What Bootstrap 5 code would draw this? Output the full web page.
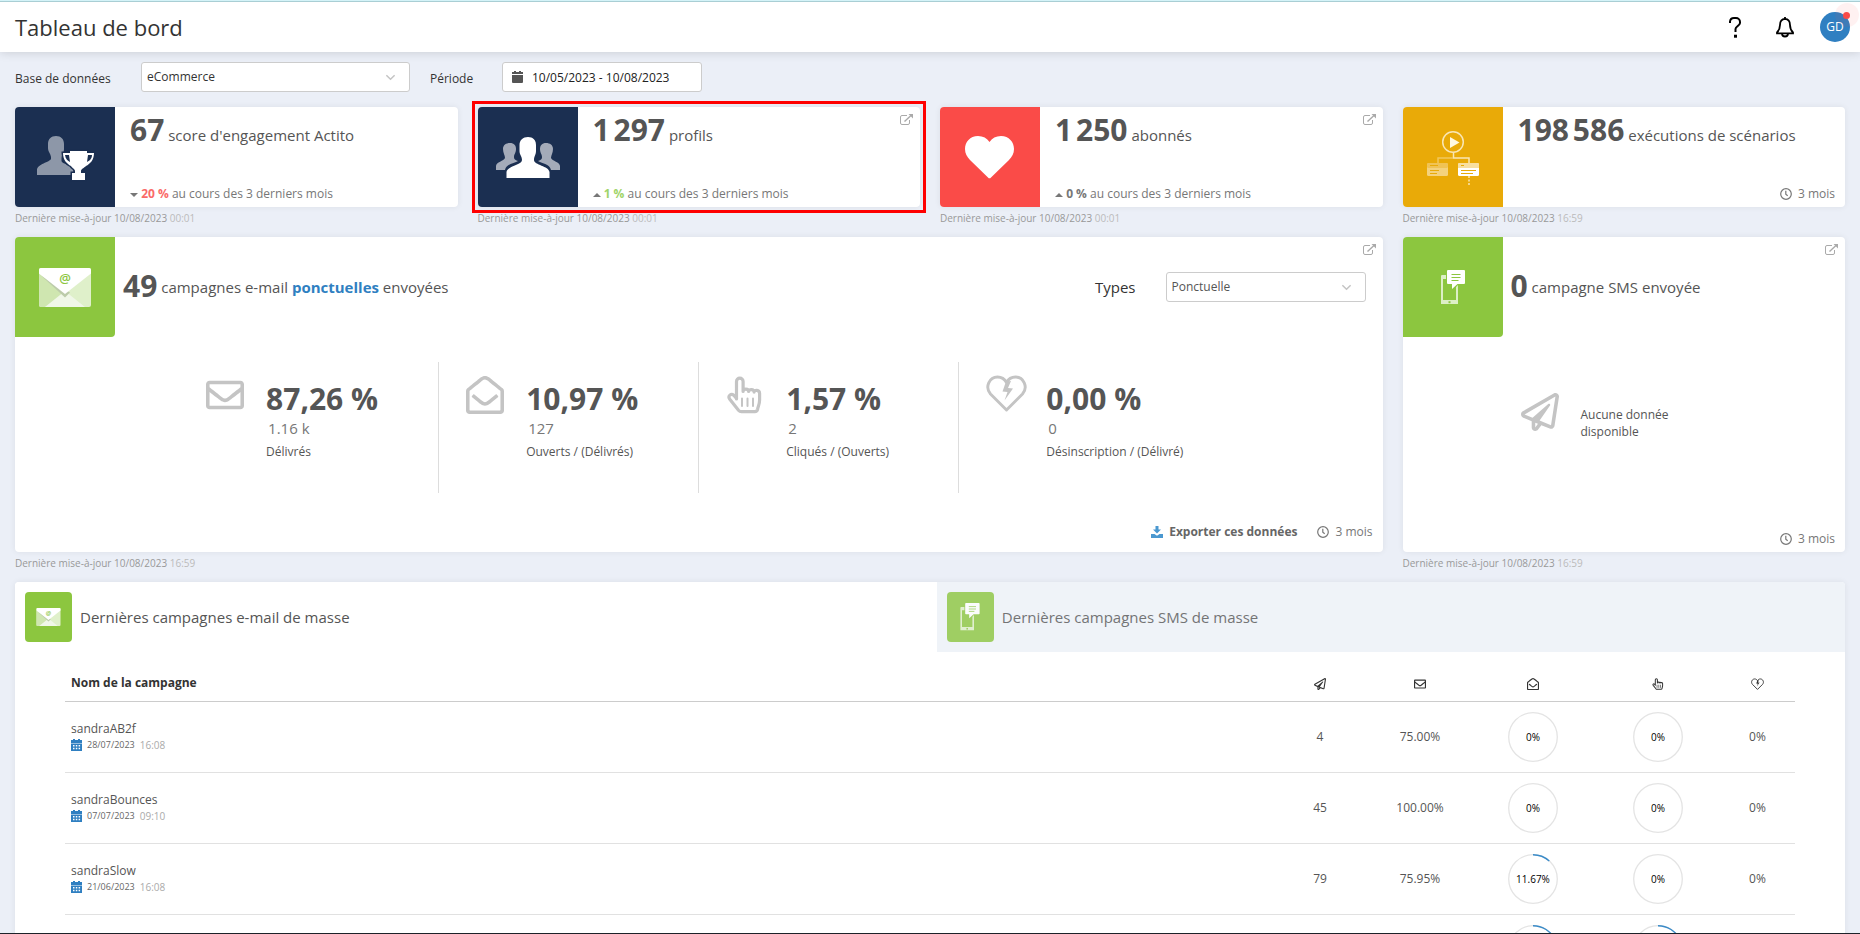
<!DOCTYPE html>
<html lang="fr">
<head>
<meta charset="utf-8">
<meta name="viewport" content="width=device-width, initial-scale=1">
<title>Tableau de bord</title>
<link rel="stylesheet" href="https://cdn.jsdelivr.net/npm/bootstrap@5.3.0/dist/css/bootstrap.min.css">
<style>
  :root { --ink: #555; --soft: #777; --faint: #bbb; --blue: #2f7fc1; --green: #8cc63f; }
  body { font-family: "Open Sans", sans-serif; font-size: 12px; line-height: 18px; color: var(--ink); background: #ebeff7; }
  .shell { height: 100vh; overflow: hidden; border-bottom: 1px solid #1d2229; }
  .topbar { height: 52px; background: #fff; border-top: 1px solid #d4f3f8; box-shadow: 0 0 10px rgba(0,0,0,.16); padding: 0 10px 0 15px; position: relative; }
  .topbar::before { content: ""; position: absolute; inset: 0 0 auto; height: 1px; background: #a9ced4; }
  .topbar h1 { font-size: 22px; line-height: 28px; font-weight: 400; color: #333; }
  .tool { border: 0; background: none; padding: 0; width: 30px; height: 30px; color: #000; position: relative; }
  .avatar { border-radius: 50%; background: var(--blue); color: #fff; font-size: 12px; }
  .avatar::before { content: ""; position: absolute; width: 24px; height: 24px; right: -9px; top: -9px; border-radius: 50%; background: rgba(250,75,72,.08); }
  .avatar::after { content: ""; position: absolute; width: 7px; height: 7px; right: 0; top: 0; border-radius: 50%; background: #fa4b48; }
  .tools { gap: 20px; }
  main { padding: 10px 15px 0; }
  .filters { height: 30px; color: #333; }
  .filters label { padding-top: 4px; }
  .w-base { width: 126px; } .w-period { width: 72px; margin-left: 20px; }
  .pick { height: 30px; border: 1px solid #ccc; border-radius: 3px; font-size: 12px; line-height: 18px; padding: 5px 30px 5px 5px; color: #333; background-color: #fff;
    background-image: url("data:image/svg+xml,%3Csvg xmlns='http://www.w3.org/2000/svg' viewBox='0 0 12 12'%3E%3Cpath fill='none' stroke='%23c4c4c4' stroke-width='1.6' d='M1.5 3.5 6 8l4.500-4.500'/%3E%3C/svg%3E"); background-size: 11px; background-position: right 13px center; }
  .pick-base { width: 269px; } .pick-type { width: 200px; color: var(--ink); }
  .datebox { width: 200px; height: 30px; border: 1px solid #ccc; border-radius: 3px; background: #fff; padding-left: 9px; gap: 9px; }
  .datebox input { border: 0; outline: 0; padding: 1px 0 0; width: 160px; color: #222; background: none; }
  .board { --bs-gutter-x: 20px; --bs-gutter-y: 0; }
  .board-top { margin-top: 15px; }
  .tile { background: #fff; border-radius: 4px; box-shadow: 0 0 6px rgba(0,0,0,.07); position: relative; }
  .tile-kpi { height: 100px; }
  .tile-tall { height: 315px; }
  .spot { outline: 3px solid #f00; outline-offset: 3px; }
  .pictile { width: 100px; height: 100px; flex: none; border-radius: 4px 0 0 4px; }
  .tile-tall .pictile { border-radius: 4px 0; }
  .navy { background: #1b2f51; } .coral { background: #fa4b48; } .amber { background: #e9aa08; } .lime { background: var(--green); }
  .kpi { padding: 8px 10px 4px 15px; }
  .headline { font-size: 15px; line-height: 30px; white-space: nowrap; }
  .headline b { font-size: 30px; }
  .headline strong { color: var(--blue); }
  .trend { color: var(--soft); font-size: 12px; white-space: nowrap; }
  .down { color: #fa6a68; } .up { color: #a0d468; }
  .stamp { font-size: 10px; line-height: 14px; height: 30px; padding-top: 4px; color: #999; }
  .stamp span { color: var(--faint); }
  .opener { position: absolute; right: 7px; top: 7px; color: #aaa; line-height: 0; }
  .range { color: var(--soft); gap: 6px; }
  .tall-title { padding-left: 8px; padding-top: 34px; }
  .tall-title b { vertical-align: -4px; }
  .types { padding: 35px 17px 0 0; color: #333; font-size: 15px; gap: 30px; }
  .types label { padding-top: 6px; }
  .metrics { width: 76%; height: 131px; margin: 25px auto 0; }
  .metric { flex: 1 1 0; padding: 12px 0 0 27px; }
  .metric + .metric { border-left: 1px solid #ddd; }
  .metric svg { width: 41px; height: 41px; color: #c4c4c4; flex: none; padding: 2px 3px 1px 0; }
  .metric .texts { padding-left: 19px; white-space: nowrap; }
  .metric svg.wide { padding: 0; }
  .pct { font-size: 30px; line-height: 36px; font-weight: 700; padding-top: 7px; }
  .raw { font-size: 15px; line-height: 20px; color: var(--soft); padding: 1px 0 5px 2px; }
  .foot { position: absolute; right: 10px; bottom: 11px; }
  .foot-mail { gap: 20px; }
  .foot-sms { bottom: 4px; }
  .export { color: #666; font-weight: 700; text-decoration: none; gap: 6px; }
  .empty { padding: 56px 0 0 118px; gap: 22px; line-height: 17px; }
  .empty svg { color: #c4c4c4; }
  .empty p { padding-top: 13px; width: 110px; }
  .tab { height: 70px; border: 0; background: #fff; padding: 10px; gap: 8px; font-size: 15px; line-height: 22px; color: var(--ink); text-align: left; }
  .tab-mail { flex: 922 1 0; border-radius: 4px 0 0; }
  .tab-sms { flex: 908 1 0; border-radius: 0 4px 0 0; background: #eff3f8; }
  .tab-sms > * { opacity: .8; }
  .tab .chip { width: 47px; height: 50px; border-radius: 4px; }
  .list-wrap { padding: 0 50px; }
  .runs { width: 100%; table-layout: fixed; margin: 0; color: var(--ink); text-align: center; }
  .runs th { height: 49px; padding: 14px 0 0; border-bottom: 1px solid #ccc; color: #333; vertical-align: middle; }
  .runs td { height: 71px; padding: 0; border-bottom: 1px solid #e1e1e1; vertical-align: middle; }
  .runs th:first-child, .runs td:first-child { text-align: left; padding-left: 6px; }
  .runs td:first-child { padding-bottom: 2px; }
  .runs td > a { color: var(--ink); text-decoration: none; }
  .when { font-size: 9px; line-height: 14px; gap: 5px; }
  .when svg { color: var(--blue); flex: none; }
  .when time { color: #666; } .when span { color: #aaa; font-size: 10px; }
  .ring { width: 50px; height: 50px; display: block; margin: 0 auto; font-size: 10px; fill: #000; }
</style>
</head>
<body>
<svg class="d-none" xmlns="http://www.w3.org/2000/svg">
  <symbol id="mail" viewBox="0 0 512 512"><path fill="currentColor" d="M464 64H48C21.490 64 0 85.490 0 112v288c0 26.510 21.490 48 48 48h416c26.510 0 48-21.490 48-48V112c0-26.510-21.490-48-48-48zm0 48v40.805c-22.422 18.259-58.168 46.651-134.587 106.490-16.841 13.247-50.201 45.072-73.413 44.701-23.208.375-56.579-31.459-73.413-44.701C106.180 199.465 70.425 171.067 48 152.805V112h416zM48 400V214.398c22.914 18.251 55.409 43.862 104.938 82.646 21.857 17.205 60.134 55.186 103.062 54.955 42.717.231 80.509-37.199 103.053-54.947 49.528-38.783 82.032-64.401 104.947-82.653V400H48z"/></symbol>
  <symbol id="mail-open" viewBox="0 0 512 512"><path fill="currentColor" d="M494.586 164.516c-4.697-3.883-111.723-89.950-135.251-108.657C337.231 38.191 299.437 0 256 0c-43.205 0-80.636 37.717-103.335 55.859-24.463 19.450-131.070 105.195-135.150 108.549A48.004 48.004 0 0 0 0 201.485V464c0 26.510 21.490 48 48 48h416c26.510 0 48-21.490 48-48V201.509a48 48 0 0 0-17.414-36.993zM464 458a6 6 0 0 1-6 6H54a6 6 0 0 1-6-6V204.347c0-1.813.816-3.526 2.226-4.665 15.870-12.814 108.793-87.554 132.364-106.293C200.755 78.880 232.398 48 256 48c23.693 0 55.857 31.369 73.410 45.389 23.573 18.741 116.503 93.493 132.366 106.316a5.990 5.990 0 0 1 2.224 4.663V458zm-31.991-187.704c4.249 5.159 3.465 12.795-1.745 16.981-28.975 23.283-59.274 47.597-70.929 56.863C336.636 362.283 299.205 400 256 400c-43.452 0-81.287-38.237-103.335-55.860-11.279-8.967-41.744-33.413-70.927-56.864-5.211-4.187-5.993-11.822-1.745-16.981l15.258-18.528c4.178-5.073 11.657-5.843 16.779-1.726 28.618 23.001 58.566 47.035 70.560 56.571C200.143 320.631 232.307 352 256 352c23.602 0 55.246-30.880 73.410-45.389 11.994-9.535 41.944-33.570 70.563-56.568 5.122-4.116 12.601-3.346 16.778 1.727l15.258 18.526z"/></symbol>
  <symbol id="plane" viewBox="0 0 512 512"><path fill="currentColor" d="M440 6.500L24 246.400c-34.400 19.900-31.100 70.800 5.700 85.900L144 379.600V464c0 46.400 59.200 65.500 86.600 28.600l43.800-59.100 111.900 46.200c5.900 2.400 12.100 3.600 18.300 3.600 8.200 0 16.300-2.100 23.600-6.200 12.800-7.200 21.600-20 23.900-34.500l59.400-387.200c6.100-40.100-36.900-68.800-71.500-48.900zM192 464v-64.600l36.600 15.100L192 464zm212.600-28.700l-153.800-63.500L391 169.500c10.700-15.500-9.500-33.500-23.700-21.200L155.800 332.600 48 288 464 48l-59.400 387.300z"/></symbol>
  <symbol id="hand" viewBox="0 0 38 38"><g fill="none" stroke="currentColor" stroke-width="3.200" stroke-linecap="round" stroke-linejoin="round"><path d="M10.500 23V5.500a3.300 3.300 0 0 1 6.600 0V15.500c0-3.300 5.500-3.300 5.500 0 0-2.600 5.500-2.600 5.500.6 0-2.500 5.500-2.500 5.500 1.400v6.500c0 4-1.500 6.500-2 9.300a3 3 0 0 1-2.800 2.300H15.500a4 4 0 0 1-3-1.400L3.800 23.300c-2.500-3.500 1.300-6.300 4-4l2.700 3.200"/><path stroke-width="2" d="M16 22.500v7.500M21.500 22.500v7.500M27 22.500v7.500"/></g></symbol>
  <symbol id="broken" viewBox="0 0 41 41"><path fill="none" stroke="currentColor" stroke-width="2.900" stroke-linejoin="round" d="M20.500 36 4.500 20C-1.500 13 3.500 3 11.500 3c4 0 7 1.800 9 5.500 2-3.700 5-5.500 9-5.500 8 0 13 10 7 17z"/><path fill="currentColor" d="m20 7.500-3.500 10 5 .5-3 8.500 8.500-12-5-.5 3-7z"/></symbol>
  <symbol id="clock" viewBox="0 0 12 12"><circle cx="6" cy="6" r="5.300" fill="none" stroke="currentColor" stroke-width="1.200"/><path fill="none" stroke="currentColor" stroke-width="1.200" d="M5.800 2.800v3.400l1.900 1.500"/></symbol>
  <symbol id="ext" viewBox="0 0 13 11"><path fill="none" stroke="currentColor" stroke-width="1" d="M7 1.500H2A1.500 1.500 0 0 0 .5 3v6A1.500 1.500 0 0 0 2 10.500h6A1.500 1.500 0 0 0 9.500 9V6"/><path fill="none" stroke="currentColor" stroke-width="1.400" d="M4.500 7.500 11 1.500"/><path fill="currentColor" d="M8.500 0H13v4.500z"/></symbol>
  <symbol id="cal" viewBox="0 0 11 12"><path fill="currentColor" d="M2 0h2v1h3V0h2v1h2v3H0V1h2zM0 4.600h11V12H0z"/><path fill="#fff" d="M2 6h1.500v1.500H2zm2.800 0h1.500v1.500H4.800zm2.800 0h1.500v1.500H7.600zM2 8.800h1.500v1.500H2zm2.800 0h1.500v1.500H4.800zm2.800 0h1.500v1.500H7.600z"/></symbol>
  <symbol id="envelope-art" viewBox="0 0 52 39"><rect width="52" height="39" rx="2" fill="#dff0ca"/><path fill="#cfe6b0" d="M0 5.500 26 27 6 39H2a2 2 0 0 1-2-2z"/><path fill="#f0f7e8" d="M6 39 26 23l20 16z"/><path fill="#bccbaa" d="m2 7.500 24 22 5-5-5-3z"/><path fill="#fff" d="M2 0h48a2 2 0 0 1 2 2v3.500L26 26 0 5.500V2a2 2 0 0 1 2-2z"/><text x="26" y="15" text-anchor="middle" font-size="13" font-weight="600" fill="#8cc63f">@</text></symbol>
  <symbol id="phone-art" viewBox="0 0 24 35"><path fill="#ddefc6" fill-rule="evenodd" d="M1 5h15a1 1 0 0 1 1 1v28H0V6a1 1 0 0 1 1-1zm1 4v21h13V9z"/><rect x="7.500" y="31.200" width="2" height="2" fill="#8cc63f"/><path fill="#8cc63f" d="M5 4h12v11l-5 5-1-5H5z"/><path fill="#fff" d="M7 0h16a1 1 0 0 1 1 1v12a1 1 0 0 1-1 1h-6.500L11 19v-5H7a1 1 0 0 1-1-1V1a1 1 0 0 1 1-1z"/><path stroke="#8cc63f" d="M10.500 4.500h9M10.500 7.500h9M10.500 10.500h7"/></symbol>
</svg>

<div class="shell">
  <header class="topbar d-flex align-items-center justify-content-between">
    <h1 class="m-0">Tableau de bord</h1>
    <div class="tools d-flex">
      <button class="tool" type="button" aria-label="Aide"><svg width="20" height="22" viewBox="0 0 20 22" fill="none" stroke="currentColor" stroke-width="2"><path d="M5 7V5.500A4 4 0 0 1 9 2h2a4 4 0 0 1 4 4v1c0 2.500-4.500 3.500-4.500 6v3"/><path stroke-width="3" d="M9 20.200h3"/></svg></button>
      <button class="tool" type="button" aria-label="Notifications"><svg width="20" height="22" viewBox="0 0 20 22" fill="none" stroke="currentColor" stroke-width="1.800"><path d="M10 2.800C6.500 3 5 5.800 5 9c0 4-1 5.500-3 7.500v.8h16v-.8c-2-2-3-3.500-3-7.500 0-3.200-1.500-6-5-6.200zM10 1v2M7 17.500a3 3 0 0 0 6 0"/></svg></button>
      <button class="tool avatar" type="button">GD</button>
    </div>
  </header>

  <main>
    <form class="filters d-flex align-items-center">
      <label class="w-base" for="base">Base de données</label>
      <select class="form-select pick pick-base" id="base"><option>eCommerce</option></select>
      <label class="w-period" for="period">Période</label>
      <div class="datebox d-flex align-items-center">
        <svg width="11" height="12" viewBox="0 0 11 12" fill="#555"><path d="M2 0h2v1h3V0h2v1h2v2H0V1h2zM0 4h11v7a1 1 0 0 1-1 1H1a1 1 0 0 1-1-1z"/></svg>
        <input id="period" type="text" value="10/05/2023 - 10/08/2023">
      </div>
    </form>

    <div class="row board board-top">
      <div class="col-3">
        <section class="tile tile-kpi d-flex">
          <div class="pictile navy"><svg width="100" height="100" viewBox="0 0 100 100"><path fill="#8d97a8" d="M41 29c5 0 8 3 8 8v5c0 4-2 5-2.500 9v3c0 3 11 4 12 8v6H22v-5c0-6 13-8 14-11v-2c-.5-4-3-5-3-9v-4c0-5 3-8 8-8z"/><path fill="#1b2f51" stroke="#1b2f51" stroke-width="3" d="M55 44h17v2h7c0 7-4 11-8 13-2 2-5 3-5 5v2h4v7H57v-7h3v-2c0-2-3-3-4-5-4-2-8-6-8-13h7z"/><path fill="#fff" fill-rule="evenodd" d="M55 44h17v2h7c0 7-4 11-8 13-2 2-5 3-5 5v2h4v7H57v-7h3v-2c0-2-3-3-4-5-4-2-8-6-8-13h7zm-5 4c.5 4 3 6 5 7l-1-7zm23 0-1 7c2-1 5-3 5-7z"/></svg></div>
          <div class="kpi flex-fill d-flex flex-column justify-content-between">
            <div class="headline"><b>67</b> score d'engagement Actito</div>
            <div class="trend"><svg width="8" height="6" viewBox="0 0 8 6"><path fill="#777" d="M0 1h8L4 5z"/></svg> <b class="down">20&nbsp;%</b> au cours des 3 derniers mois</div>
          </div>
        </section>
        <div class="stamp">Dernière mise-à-jour 10/08/2023 <span>00:01</span></div>
      </div>
      <div class="col-3">
        <div class="spot">
        <section class="tile tile-kpi d-flex">
          <div class="pictile navy"><svg width="100" height="100" viewBox="0 0 100 100"><g fill="#a4abb9"><path id="side" d="M32 36c4 0 6 2.500 6 6 0 4-2 5-2 8 0 3 2 3 4 4-3 2-12 3-13 9H18v-4c0-4 8-5 9-8 0-3-2-5-2-9s3-6 7-6z"/><use href="#side" transform="matrix(-1 0 0 1 100 0)"/></g><path fill="#fff" d="M50 30c5 0 8 3 8 8v6c0 4-2 5-2 9 0 5 15 6 15.500 12v6h-43v-6C29 59 44 58 44 53c0-4-2.500-5-2.500-9v-6c0-5 3.500-8 8.500-8z"/></svg></div>
          <div class="kpi flex-fill d-flex flex-column justify-content-between">
            <div class="headline"><b>1&#8239;297</b> profils</div>
            <div class="trend"><svg width="8" height="6" viewBox="0 0 8 6"><path fill="#777" d="M0 5h8L4 1z"/></svg> <b class="up">1&nbsp;%</b> au cours des 3 derniers mois</div>
          </div>
          <a class="opener" href="#profils" aria-label="Ouvrir les profils"><svg width="13" height="11"><use href="#ext"/></svg></a>
        </section>
        </div>
        <div class="stamp">Dernière mise-à-jour 10/08/2023 <span>00:01</span></div>
      </div>
      <div class="col-3">
        <section class="tile tile-kpi d-flex">
          <div class="pictile coral"><svg width="100" height="100" viewBox="0 0 100 100"><path fill="#fff" d="M51 70.500a2 2 0 0 1-3 0L30 53c-3-3.500-5-6.500-5-11 0-7 5-13 13-13 5 0 9 2 11.500 6 2.500-4 6.500-6 11.500-6 8 0 13 6 13 13 0 4.500-2 7.500-5 11z"/></svg></div>
          <div class="kpi flex-fill d-flex flex-column justify-content-between">
            <div class="headline"><b>1&#8239;250</b> abonnés</div>
            <div class="trend"><svg width="8" height="6" viewBox="0 0 8 6"><path fill="#777" d="M0 5h8L4 1z"/></svg> <b>0&nbsp;%</b> au cours des 3 derniers mois</div>
          </div>
          <a class="opener" href="#abonnes" aria-label="Ouvrir les abonnés"><svg width="13" height="11"><use href="#ext"/></svg></a>
        </section>
        <div class="stamp">Dernière mise-à-jour 10/08/2023 <span>00:01</span></div>
      </div>
      <div class="col-3">
        <section class="tile tile-kpi d-flex">
          <div class="pictile amber"><svg width="100" height="100" viewBox="0 0 100 100"><g fill="none" stroke="#f9e6b4" stroke-width="1.500"><circle cx="50" cy="35" r="10.300"/><path d="M50.500 45.500V51H66v6"/><path stroke="#f1c75c" d="M50 51H35v6"/><path stroke-dasharray="2 1.500" d="M66 69v10"/></g><path fill="#fff8e0" d="m47 30 9.500 5.500L47 41z"/><rect x="24" y="56" width="21" height="13" rx="1.500" fill="#f4d27e"/><rect x="24" y="56" width="21" height="5" rx="1.500" fill="#f0c355"/><rect x="55" y="56" width="21" height="13" rx="1.500" fill="#fff"/><path fill="#f8dfa0" d="M55 61v-3.500a1.500 1.500 0 0 1 1.500-1.500h18a1.500 1.500 0 0 1 1.500 1.500V61z"/><path stroke="#e9aa08" d="M27 58.500h8M27 63.500h9M27 66.500h7M58 58.500h3M58 63.500h15M58 66.500h12"/></svg></div>
          <div class="kpi flex-fill d-flex flex-column justify-content-between">
            <div class="headline"><b>198&#8239;586</b> exécutions de scénarios</div>
            <div class="range d-flex align-items-center justify-content-end"><svg width="12" height="12"><use href="#clock"/></svg>3 mois</div>
          </div>
        </section>
        <div class="stamp">Dernière mise-à-jour 10/08/2023 <span>16:59</span></div>
      </div>
    </div>

    <div class="row board">
      <div class="col-9">
        <section class="tile tile-tall">
          <div class="d-flex">
            <div class="pictile lime d-flex align-items-center justify-content-center"><svg width="52" height="39"><use href="#envelope-art"/></svg></div>
            <div class="headline tall-title flex-fill"><b>49</b> campagnes e-mail <strong>ponctuelles</strong> envoyées</div>
            <div class="types d-flex align-items-start"><label for="types">Types</label>
              <select class="form-select pick pick-type" id="types"><option>Ponctuelle</option></select></div>
          </div>
          <div class="metrics d-flex">
            <div class="metric d-flex"><svg><use href="#mail"/></svg><div class="texts"><div class="pct">87,26 %</div><div class="raw">1.16 k</div><div>Délivrés</div></div></div>
            <div class="metric d-flex"><svg><use href="#mail-open"/></svg><div class="texts"><div class="pct">10,97 %</div><div class="raw">127</div><div>Ouverts / (Délivrés)</div></div></div>
            <div class="metric d-flex"><svg><use href="#hand"/></svg><div class="texts"><div class="pct">1,57 %</div><div class="raw">2</div><div>Cliqués / (Ouverts)</div></div></div>
            <div class="metric d-flex"><svg class="wide"><use href="#broken"/></svg><div class="texts"><div class="pct">0,00 %</div><div class="raw">0</div><div>Désinscription / (Délivré)</div></div></div>
          </div>
          <a class="opener" href="#emails" aria-label="Ouvrir les campagnes e-mail"><svg width="13" height="11"><use href="#ext"/></svg></a>
          <div class="foot foot-mail d-flex">
            <a class="export d-flex align-items-center" href="#export"><svg width="12" height="12" viewBox="0 0 12 12" fill="#4a98d0"><path d="M4.500 0h3v3.500H10l-4 4-4-4h2.500zM0 8h3.500L6 9.800 8.500 8H12v4H0z"/></svg>Exporter ces données</a>
            <div class="range d-flex align-items-center"><svg width="12" height="12"><use href="#clock"/></svg>3 mois</div>
          </div>
        </section>
        <div class="stamp">Dernière mise-à-jour 10/08/2023 <span>16:59</span></div>
      </div>
      <div class="col-3">
        <section class="tile tile-tall">
          <div class="d-flex">
            <div class="pictile lime d-flex align-items-center justify-content-center"><svg width="24" height="35"><use href="#phone-art"/></svg></div>
            <div class="headline tall-title"><b>0</b> campagne SMS envoyée</div>
          </div>
          <div class="empty d-flex"><svg width="38" height="38"><use href="#plane"/></svg><p class="m-0">Aucune donnée disponible</p></div>
          <a class="opener" href="#sms" aria-label="Ouvrir les campagnes SMS"><svg width="13" height="11"><use href="#ext"/></svg></a>
          <div class="foot foot-sms range d-flex align-items-center"><svg width="12" height="12"><use href="#clock"/></svg>3 mois</div>
        </section>
        <div class="stamp">Dernière mise-à-jour 10/08/2023 <span>16:59</span></div>
      </div>
    </div>

    <section class="tile">
      <div class="d-flex" role="tablist">
        <button class="tab tab-mail d-flex align-items-center" role="tab" type="button"><span class="chip lime d-flex align-items-center justify-content-center"><svg width="25" height="18"><use href="#envelope-art"/></svg></span><span>Dernières campagnes e-mail de masse</span></button>
        <button class="tab tab-sms d-flex align-items-center" role="tab" type="button"><span class="chip lime d-flex align-items-center justify-content-center"><svg width="20" height="28"><use href="#phone-art"/></svg></span><span>Dernières campagnes SMS de masse</span></button>
      </div>
      <div class="list-wrap">
        <table class="runs">
          <colgroup><col><col width="100"><col width="100"><col width="126"><col width="124"><col width="75"></colgroup>
          <thead><tr>
            <th>Nom de la campagne</th>
            <th aria-label="Envoyés"><svg width="12" height="12"><use href="#plane"/></svg></th>
            <th aria-label="Délivrés"><svg width="12" height="12"><use href="#mail"/></svg></th>
            <th aria-label="Ouverts"><svg width="12" height="12"><use href="#mail-open"/></svg></th>
            <th aria-label="Cliqués"><svg width="12" height="12"><use href="#hand"/></svg></th>
            <th aria-label="Désinscriptions"><svg width="13" height="13"><use href="#broken"/></svg></th>
          </tr></thead>
          <tbody id="runs"></tbody>
        </table>
      </div>
    </section>
  </main>
</div>

<script src="https://cdn.jsdelivr.net/npm/bootstrap@5.3.0/dist/js/bootstrap.bundle.min.js"></script>
<script>
  const runs = [
    ['sandraAB2f', '28/07/2023', '16:08', 4, '75.00%', 0, 0],
    ['sandraBounces', '07/07/2023', '09:10', 45, '100.00%', 0, 0],
    ['sandraSlow', '21/06/2023', '16:08', 79, '75.95%', 11.67, 0]
  ];
  const ring = (v, label = v + '%') => `<svg class="ring" viewBox="0 0 50 50"><circle cx="25" cy="25" r="24.300" fill="none" stroke="#e4e4e4" stroke-width="1.300"/>${v ? `<circle cx="25" cy="25" r="24.300" fill="none" stroke="#3a8bc8" stroke-width="1.400" pathLength="100" stroke-dasharray="${v} 100" transform="rotate(-90 25 25)"/>` : ''}<text x="25" y="29" text-anchor="middle">${label}</text></svg>`;
  const rows = runs.map(([name, day, hour, sent, ok, open, click]) => `<tr>
    <td><a href="#${name}">${name}</a><div class="when d-flex align-items-center"><svg width="11" height="12"><use href="#cal"/></svg><time>${day}</time><span>${hour}</span></div></td>
    <td>${sent}</td><td>${ok}</td><td>${ring(open)}</td><td>${ring(click)}</td><td>0%</td></tr>`);
  // The next row is still loading: only its rings are drawn.
  rows.push(`<tr><td></td><td></td><td></td><td>${ring(18, '')}</td><td>${ring(18, '')}</td><td></td></tr>`);
  document.getElementById('runs').innerHTML = rows.join('');
</script>
</body>
</html>
